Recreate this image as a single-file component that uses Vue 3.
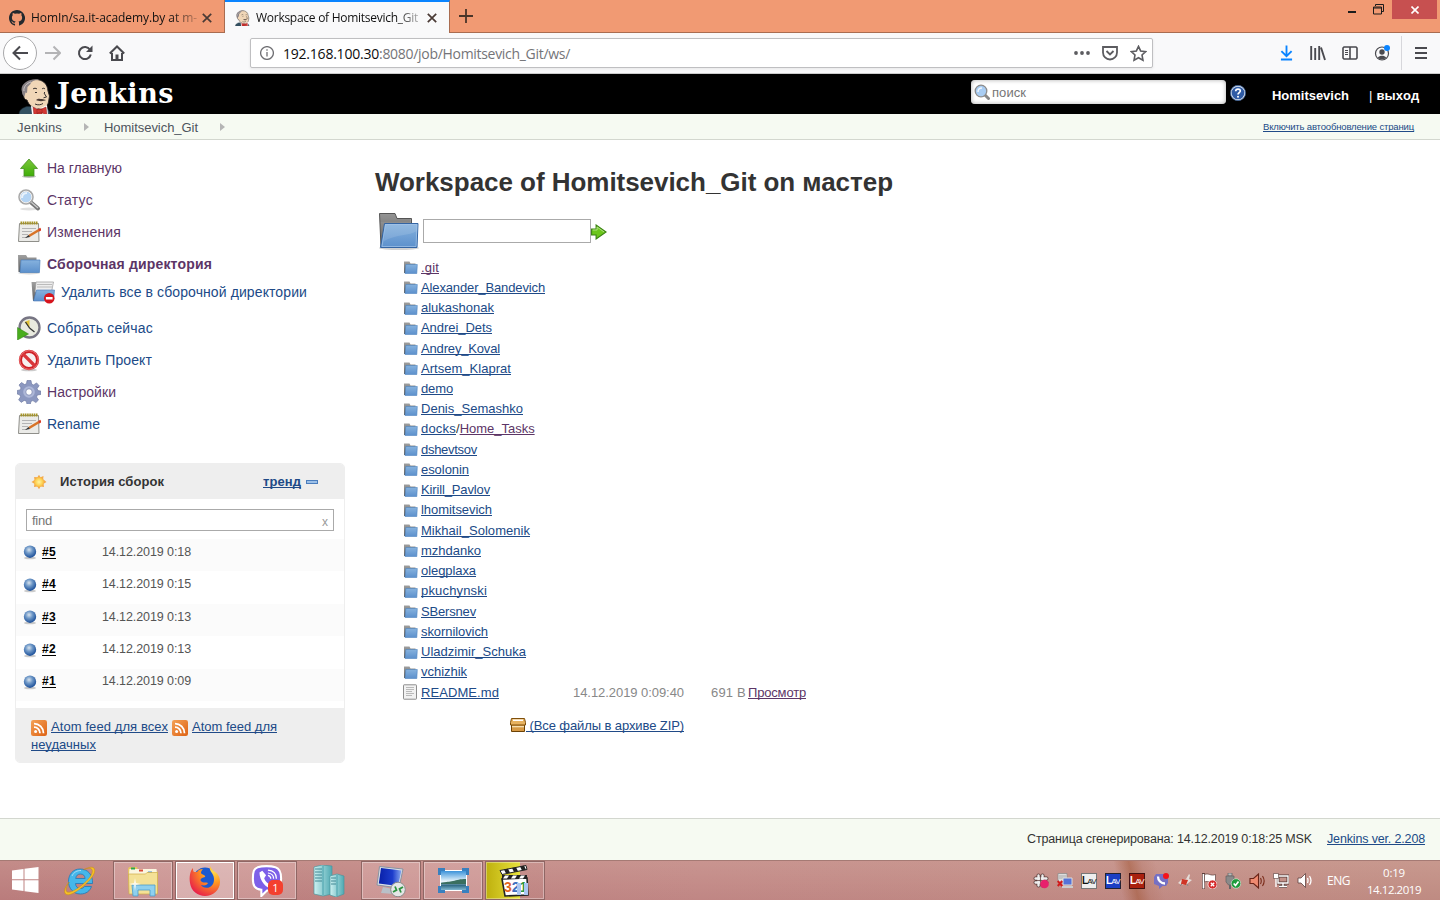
<script setup>
// Spreads the letters of an element so that it takes the given width in pixels.
const vFit = {
  mounted(el, { value }) {
    const range = document.createRange()
    range.selectNodeContents(el)
    const w = range.getBoundingClientRect().width
    const n = el.textContent.length
    if (w && n) el.style.letterSpacing = (value - w) / n + 'px'
  },
}

const tasks = [
  { icon: 'up', text: 'На главную', w: 75, visited: true },
  { icon: 'search', text: 'Статус', w: 46, visited: true },
  { icon: 'note', text: 'Изменения', w: 74, visited: true },
  { icon: 'folder', text: 'Сборочная директория', w: 165, visited: true, bold: true },
  { icon: 'wipe', text: 'Удалить все в сборочной директории', w: 246, sub: true },
  { icon: 'clock', text: 'Собрать сейчас', w: 106 },
  { icon: 'ban', text: 'Удалить Проект', w: 105 },
  { icon: 'gear', text: 'Настройки', w: 69, visited: true },
  { icon: 'note', text: 'Rename', w: 53 },
]

const builds = [
  { id: '#5', at: '14.12.2019 0:18' },
  { id: '#4', at: '14.12.2019 0:15' },
  { id: '#3', at: '14.12.2019 0:13' },
  { id: '#2', at: '14.12.2019 0:13' },
  { id: '#1', at: '14.12.2019 0:09' },
]

const dirs = [
  ['.git', 18], ['Alexander_Bandevich', 124], ['alukashonak', 73], ['Andrei_Dets', 71],
  ['Andrey_Koval', 79], ['Artsem_Klaprat', 90], ['demo', 32], ['Denis_Semashko', 102],
  ['docks', 35], ['dshevtsov', 56], ['esolonin', 48], ['Kirill_Pavlov', 69],
  ['lhomitsevich', 71], ['Mikhail_Solomenik', 109], ['mzhdanko', 60], ['olegplaxa', 55],
  ['pkuchynski', 66], ['SBersnev', 55], ['skornilovich', 67], ['Uladzimir_Schuka', 105],
  ['vchizhik', 46],
]

const apps = [
  { icon: 'win', cls: 'start' }, { icon: 'ie', cls: 'plain' }, { icon: 'explorer', cls: 'open' },
  { icon: 'firefox', cls: 'open active' }, { icon: 'viber', cls: 'open' }, { icon: 'servers', cls: 'plain' },
  { icon: 'rdp', cls: 'open' }, { icon: 'picture', cls: 'open' }, { icon: 'clapper', cls: 'open progress' },
]
const tray = ['slack', 'netpc', 'lavw', 'lavb', 'lavr', 'tviber', 'java', 'flag', 'usb', 'spk', 'net', 'vol']
</script>

<template>
  <div class="screen">
    <svg class="sprite" width="0" height="0">
      <defs>
        <linearGradient id="gBlue" x1="0" y1="0" x2="0" y2="1"><stop offset="0" stop-color="#86b2de" /><stop offset="1" stop-color="#5c90cc" /></linearGradient>
        <linearGradient id="gGrey" x1="0" y1="0" x2="0" y2="1"><stop offset="0" stop-color="#a0a0a0" /><stop offset="1" stop-color="#5c5c5c" /></linearGradient>
        <linearGradient id="gGreen" x1="0" y1="0" x2="0" y2="1"><stop offset="0" stop-color="#7cc73c" /><stop offset="1" stop-color="#3fae08" /></linearGradient>
        <linearGradient id="gOrange" x1="0" y1="0" x2="1" y2="1"><stop offset="0" stop-color="#f4a257" /><stop offset="1" stop-color="#de6213" /></linearGradient>
        <radialGradient id="gBall" cx=".42" cy=".35" r=".62"><stop offset="0" stop-color="#d9e4ee" /><stop offset=".45" stop-color="#7099c8" /><stop offset="1" stop-color="#21549c" /></radialGradient>
        <radialGradient id="gSun"><stop offset="0" stop-color="#fff6a0" /><stop offset="1" stop-color="#fcc43c" /></radialGradient>
        <radialGradient id="gFire" cx=".8" cy=".15" r=".95"><stop offset="0" stop-color="#ffe14d" /><stop offset=".45" stop-color="#ff9420" /><stop offset="1" stop-color="#e8204a" /></radialGradient>
        <linearGradient id="gAqua" x1="0" y1="0" x2="1" y2="0"><stop offset="0" stop-color="#cdf1f1" /><stop offset="1" stop-color="#4fa9b2" /></linearGradient>
        <linearGradient id="gScreen" x1="0" y1="0" x2="1" y2="0"><stop offset="0" stop-color="#0920a8" /><stop offset=".6" stop-color="#1c3ccc" /><stop offset="1" stop-color="#88a8ef" /></linearGradient>
        <linearGradient id="gSky" x1="0" y1="0" x2="0" y2="1"><stop offset="0" stop-color="#3c93da" /><stop offset=".55" stop-color="#eaf6fb" /><stop offset=".75" stop-color="#306a85" /><stop offset="1" stop-color="#80b8d0" /></linearGradient>
      </defs>

      <symbol id="github" viewBox="0 0 16 16"><path fill="#24292e" d="M8 0C3.58 0 0 3.58 0 8c0 3.54 2.29 6.53 5.47 7.59.4.07.55-.17.55-.38v-1.5c-2.2.4-2.7-.9-2.9-1.4-.2-.5-.6-.9-1-1.1.7-.2 1.3.2 1.7.8.6.9 1.4.7 2.2.4.1-.5.3-.9.6-1.1-2-.2-3.7-.9-3.7-3.9 0-.9.3-1.6.8-2.2-.1-.3-.4-1.1.1-2.2 0 0 .7-.2 2.2.8a7.5 7.5 0 0 1 4 0c1.500-1 2.200-.8 2.200-.8.5 1.100.2 1.900.1 2.200.5.6.8 1.300.8 2.200 0 3-1.800 3.700-3.700 3.900.3.3.6.8.6 1.500v2.400c0 .2.1.5.5.4A8 8 0 0 0 8 0z" /></symbol>
      <symbol id="butler" viewBox="0 0 34 36">
        <path fill="#335061" stroke="#1c2c36" stroke-width=".6" d="M2 37c0-5 3-7 8-8.500l16 .5c5 1 7 4 7 8z" />
        <path fill="#f0d6b7" stroke="#231f20" stroke-width=".9" d="M6 15C5 6 11 1.500 18.500 1.500c7 0 12 4 12.500 11.500l1.500 5-1 6c-1 4-4 7-9 7-6 0-11-4-12.500-9-3 0-3.500-4-4-7z" />
        <path fill="#8a8386" d="M5 14C3 8 8 3 14 2c3-.8 6-1 8-.3-5 .3-8 1.800-8.500 4.300l-3 3-.5 6-1.500-.5-1 4C6 18 5 16 5 14z" />
        <path fill="none" stroke="#d8d4d4" stroke-width=".8" d="M7 13c-1-4 3-8 7-9" />
        <path fill="#fff" d="M14 28l8 3 8-4 1 9H15z" />
        <path fill="#d33833" stroke="#8b1d1a" stroke-width=".5" d="M16 29l6 3 7-3 1 8-7-3-6 3zM20 31h5v5h-5z" />
        <path fill="none" stroke="#231f20" stroke-width=".9" d="M16 11c1-1 3-1 4 0M25 11c1-1 2-1 3 0M18 14.500h2M27 14.500h1M27 15l2.500 4-3 .8M18 26c3 1.500 6 .8 8-.5" />
        <path fill="#4a3b36" d="M19 22c2-2 4-1.300 6-1l4 1c-2 1.500-8 1.500-10 0z" />
      </symbol>
      <symbol id="folder" viewBox="0 0 24 24"><ellipse cx="12" cy="21" rx="11" ry="1.500" fill="#000" opacity=".15" /><path fill="url(#gGrey)" d="M1 3h8l1.500 2.500H19.500V20H1.500z" /><path fill="url(#gBlue)" stroke="#4a7fbb" stroke-width=".7" d="M4 8h19l-.6 12.500H3z" /></symbol>
      <symbol id="dir" viewBox="0 0 15 16"><path fill="url(#gGrey)" d="M1 2.500h5.500l1 2H12.500V14H1z" /><path fill="url(#gBlue)" stroke="#4f84c0" stroke-width=".6" d="M2.800 5.500h11.500l-.5 9H2z" /></symbol>
      <symbol id="bigfolder" viewBox="0 0 48 48"><ellipse cx="24" cy="41" rx="20" ry="2" fill="#000" opacity=".18" /><path fill="url(#gGrey)" stroke="#555" d="M4.500 6.500H20L22 11.500h14.500V40H6z" /><path stroke="#555" stroke-width=".6" opacity=".5" d="M5 8h15M5 10h16M5 12h30M5 14h30" /><path fill="url(#gBlue)" stroke="#3465a4" d="M9.500 16.500h33.500l-1 24H5.500z" /><path fill="#fff" opacity=".12" d="M10 17h32v7c-8 5-20 3-33 10z" /><path fill="none" stroke="#a4c5e8" opacity=".7" d="M10.500 17.500H42l-1 22H7z" /></symbol>
      <symbol id="up" viewBox="0 0 24 24"><ellipse cx="12" cy="20.500" rx="7" ry="1.500" fill="#000" opacity=".25" /><path fill="url(#gGreen)" stroke="#489023" stroke-width=".8" d="M12 3l8.500 9.500H17V20H7v-7.500H3.500z" /></symbol>
      <symbol id="search" viewBox="0 0 24 24"><ellipse cx="12" cy="21" rx="9" ry="1.500" fill="#000" opacity=".12" /><path d="M13.500 14l7.500 6.500" stroke="#777" stroke-width="4" stroke-linecap="round" /><path d="M14 14l7 6" stroke="#ccc" stroke-width="1.200" /><circle cx="9" cy="9" r="6.800" fill="#b4d4f4" stroke="#a9a9a9" stroke-width="2" /><circle cx="9" cy="9" r="5.800" fill="none" stroke="#eee" /><path d="M5 10c0-3 2-5 5-5" stroke="#fff" stroke-width="2" fill="none" opacity=".7" /></symbol>
      <symbol id="find" viewBox="0 0 16 16"><path d="M10 10l4.500 4.500" stroke="#888" stroke-width="3" stroke-linecap="round" /><circle cx="7" cy="7" r="5.800" fill="#a9cdf3" stroke="#8c8c8c" stroke-width="1.300" /><path d="M4 8c0-2 1-4 4-4" stroke="#fff" stroke-width="1.500" fill="none" opacity=".8" /></symbol>
      <symbol id="note" viewBox="0 0 24 24"><path fill="#ebebe8" stroke="#8f8f8a" d="M2.500 3.500h19l.5 18H1.500z" /><path stroke="#a49328" stroke-width="3" stroke-dasharray="1.600 .6" d="M3.500 3h17" /><path stroke="#b4b4b4" d="M5 8.500h14M5 11.500h10M5 14.500h6M5 17.500h5" /><path stroke="#d87428" stroke-width="2.600" d="M22 10l-10 6" /><path stroke="#d83c24" stroke-width="2.800" d="M24 9l-2.200 1.200" /><path fill="#333" d="M8 18l3.500-3 1.500 2z" /></symbol>
      <symbol id="minus-badge" viewBox="0 0 24 24"><circle cx="12" cy="12" r="11" fill="#d7141c" /><path fill="#fff" d="M5 9.500h14v5H5z" /></symbol>
      <symbol id="wipe" viewBox="0 0 24 24"><path fill="url(#gGrey)" d="M.5 2H8l4 2v17H2z" /><path fill="#eee" stroke="#999" stroke-width=".7" d="M5 2h17.500l-2 10H4z" /><path stroke="#bbb" d="M6 4.500h15M6 7h15" /><path fill="url(#gBlue)" stroke="#4a7ab8" stroke-width=".6" d="M5.500 10h18L22.500 21H2.500z" /><use href="#minus-badge" x="12.500" y="12.500" width="11.500" height="11.500" /></symbol>
      <symbol id="clock" viewBox="0 0 24 24"><circle cx="12.500" cy="11.500" r="10" fill="#e9eadf" stroke="#777583" stroke-width="2.300" /><path fill="#e4c438" d="M12.500 12V4l-5 2z" /><path stroke="#333" stroke-width="1.300" d="M12.500 12l-4-6M12.500 12l5 4" fill="none" /><path fill="#49ad1d" stroke="#2f7f11" stroke-width=".5" d="M.5 11.500l11 6.500-11 6z" /></symbol>
      <symbol id="ban" viewBox="0 0 24 24"><ellipse cx="12" cy="22" rx="8" ry="1.300" fill="#000" opacity=".2" /><circle cx="12" cy="12" r="8.600" fill="#f6f0f0" stroke="#cf2026" stroke-width="3.200" /><path stroke="#d9363a" stroke-width="3.200" d="M6 6l12 12" /><circle cx="12" cy="12" r="9.300" fill="none" stroke="#f58a8a" stroke-width=".8" /></symbol>
      <symbol id="gear" viewBox="0 0 24 24"><g fill="#8c98c0" stroke="#66729c" stroke-width=".6"><path d="M10 .5h4l.6 3.500 2 .9 3-2 2.500 2.800-2 2.900.8 2 3 .5v3.300l-3.500.6-.9 2 2 3-2.600 2.600-3-2-2 .8-.6 3.100H10l-.6-3.200-2.200-.9-3 2-2.600-2.600 2-3-.9-2L.2 14v-3.500l3-.6.8-2-2-2.900L4.500 2.500l3 2 2-.8z" /></g><circle cx="12" cy="12" r="5.800" fill="#aeb8d8" /><circle cx="12" cy="12" r="3.300" fill="#fff" stroke="#8a94ba" /></symbol>
      <symbol id="sun" viewBox="0 0 16 16"><path fill="#f3a94a" d="M8 .7l1.500 2.600 3-1.300-.3 3.300L15.500 8l-2.900 1.800.4 3.200-3.400-.6L8 15.300l-1.700-2.900-3.300.6.400-3.200L.5 8l3-1.900-.4-3.200 3.300.3z" /><circle cx="8" cy="8" r="4.600" fill="url(#gSun)" stroke="#f8bd50" stroke-width=".6" /></symbol>
      <symbol id="ball" viewBox="0 0 16 16"><ellipse cx="8" cy="14" rx="6" ry="1.300" fill="#000" opacity=".2" /><circle cx="8" cy="7.700" r="6.200" fill="url(#gBall)" /></symbol>
      <symbol id="rss" viewBox="0 0 16 16"><rect width="16" height="16" rx="2.200" fill="url(#gOrange)" /><circle cx="4.600" cy="11.600" r="1.500" fill="#fff" /><path fill="none" stroke="#fff" stroke-width="1.800" d="M3 7.200a6 6 0 0 1 6 6M3 3.700a9.500 9.500 0 0 1 9.500 9.500" /></symbol>
      <symbol id="arrow" viewBox="0 0 16 16"><path fill="#6cc61c" stroke="#3a8212" stroke-width="1.100" d="M.6 5h4.500V1l10 7-10 7v-4H.6z" /><path fill="none" stroke="#bfe89a" stroke-width=".8" d="M1.600 6h4.500V3l7 5" /></symbol>
      <symbol id="text" viewBox="0 0 16 16"><rect x="1.500" y=".8" width="13" height="14.400" rx=".6" fill="#f2f2f2" stroke="#8d8d8d" /><path stroke="#b3b3b3" stroke-width=".9" d="M4 3.500h8M4 5.500h8M4 7.500h6M4 9.500h8M4 11.500h6" /></symbol>
      <symbol id="zip" viewBox="0 0 16 16"><path fill="#d79a45" stroke="#6c4205" d="M1.500 7h13v7.500h-13z" /><path fill="#e7b25f" stroke="#7f4f0a" d="M.5 5.500L1.500 1.500h13l1 4v2.500H.5z" /><path fill="#fff" d="M3 2.500h10v1.500H3z" /><path fill="#f6dfb0" d="M2 9h12v1.300H2z" /></symbol>
      <symbol id="help" viewBox="0 0 16 16"><circle cx="8" cy="8" r="7" fill="#2f5ba5" stroke="#dbe4f1" stroke-width="1.300" /><circle cx="8" cy="8" r="7.600" fill="none" stroke="#234a86" stroke-width=".7" /><path fill="none" stroke="#fff" stroke-width="1.700" d="M5.700 6.300c0-3 4.600-2.900 4.600-.3 0 1.500-2.300 1.700-2.300 3.500" /><circle cx="8" cy="11.800" r="1" fill="#fff" /></symbol>

      <symbol id="win" viewBox="0 0 28 28"><path fill="#fff" d="M1 4.500l11.500-1.500v10.300H1zM13.500 2.800L27.500 1v12.300h-14zM1 14.300h11.500V25L1 23.500zM13.500 14.300h14V27l-14-1.800z" /></symbol>
      <symbol id="ie" viewBox="0 0 32 32"><path fill="#45b7ea" stroke="#1f78b6" stroke-width=".8" d="M16 5C8.500 5 4.500 11 4.500 17.500S9 30 16.500 30c5.500 0 9.500-3 11-7.500h-7c-1 1.500-2.300 2-4 2-3 0-4.800-1.800-5-5h17C29 11 24 5 16 5zm-4.300 9.500c.4-3 2-4.500 4.800-4.500 2.700 0 4.300 1.500 4.600 4.500z" /><path fill="none" stroke="#fff" opacity=".5" d="M8 12c2-4 5-5.500 9-5.500" /><path fill="#f5c025" stroke="#c78a10" stroke-width=".5" d="M30.500 5c-1-3-6-2-11 .8 5-2 8-2 8.700.4 1 4-4 10-11 15.500S3.500 30 2.300 27c-.8-2 .5-5.500 3-9C2 21.500-1 27 1.500 30c2.500 2.500 10-1 17.500-7.500S32 9.500 30.500 5z" /></symbol>
      <symbol id="explorer" viewBox="0 0 32 32"><path fill="#e6c75e" d="M1 4l1-2h8l1 3h8l1 1h10l1 2v20H2z" /><path fill="#fbf6df" d="M2.500 4h27l.5 5H2z" /><path fill="#2da44e" d="M4 2.500h4v2H4z" /><path fill="#d84a34" d="M12 4.500h4v2h-4z" /><path fill="#4a90d9" d="M21 6.500h4v2h-4z" /><path fill="#f4e196" stroke="#cfae48" stroke-width=".7" d="M1.500 9h17l1.500-1.500h10.500V29H2z" /><path fill="#8fd0ee" stroke="#4c9cc9" stroke-width=".8" d="M5 20h23v11h-5v-6H11v6H6z" /><path fill="#fff" opacity=".8" d="M8 13l1 5 5 1-5 1-1 6-1-6-5-1 5-1z" /></symbol>
      <symbol id="firefox" viewBox="0 0 32 32"><circle cx="16" cy="14" r="11.500" fill="#1c59cf" /><path fill="url(#gFire)" d="M21 1c-1 5 2 6 3 9 2 4 1 10-3 12s-8 0-9-2c4 1 6 0 7-2-2-1-4 0-6-1s-2-3 0-4l3-1c1-2-3-2-4-4 0-2 1-3 2-4-3 0-5 1-6 3-1 0-2 0-3 0-1-1-1-2-1-4C1 6 0 12 1 18c1 8 8 13 15 13 8 0 15-6 15-14 0-6-3-9-5-10C24 5 22 4 21 1z" /></symbol>
      <symbol id="viber" viewBox="0 0 32 34"><path fill="#7d60e8" stroke="#fff" stroke-width="2.200" d="M6 2.500C11 .8 20 .8 25 2.500c5 1.500 6 6 6 12s-1.500 10-6 11.500c-3 .8-6 1-9 1l-6 6v-6.700C3 25.500 1 22 1 14.500S2 4 6 2.500z" /><path fill="#fff" d="M8 8l3-2 4 5-2 3c1 3 3 5 5 6l3-2 5 4-3 4C15 25 8 17 8 8z" /><path fill="none" stroke="#fff" stroke-width="1.300" d="M17 5.500c6 .5 9 4 9 9M17 8.500c4 .5 6 3 6 6M17 11c2 .5 3 1.500 3 3.500" /></symbol>
      <symbol id="servers" viewBox="0 0 32 32"><path fill="url(#gAqua)" stroke="#4a969f" stroke-width=".7" d="M1 2l8-2 10 1v28l-9 2-9-2z" /><path stroke="#357f8c" stroke-width=".9" d="M2 4h7M2 7h7M2 10h7M2 13h7M2 16h7" /><path stroke="#479faa" d="M10 1v29" /><path fill="url(#gAqua)" stroke="#4a969f" stroke-width=".7" d="M17 11l7-2 7 2v18l-8 3-6-2z" /><path stroke="#357f8c" stroke-width=".9" d="M18 13h5M18 16h5M18 19h5" /><path stroke="#479faa" d="M24 10v21" /></symbol>
      <symbol id="rdp" viewBox="0 0 32 32"><path fill="#b9c0c8" d="M8 22l10 2 1 5-13-1z" /><path fill="#d9dfe6" stroke="#8992a0" d="M4.500 1.500L28 4l-4 19L2 20z" /><path fill="url(#gScreen)" d="M6 3l20.500 2.500L23 21 3.800 18.500z" /><circle cx="23" cy="24.500" r="7.300" fill="#e4e6e6" stroke="#8a8a8a" /><path fill="none" stroke="#2f9340" stroke-width="1.800" d="M18 27l3.500-2-1.500-3.500M28 22l-3.500 2 1.500 3.500" /></symbol>
      <symbol id="picture" viewBox="0 0 32 32"><path fill="#fff" d="M3 5h27v21H3z" /><path fill="url(#gSky)" d="M4 6h25v19H4z" /><path fill="#3a6f5f" d="M4 18c6-1.500 8-1 12-2s7-2 13-2v5H4z" /><path fill="#3980bf" d="M1 3h7v3H4v4H1zM32 3h-7v3h4v4h3zM1 28h7v-3H4v-4H1zM32 28h-7v-3h4v-4h3z" /></symbol>
      <symbol id="clapper" viewBox="0 0 32 32"><path fill="#fff" stroke="#222" stroke-width="1.600" d="M3 14l25-1 1 17-23 1z" /><path fill="#fff" stroke="#222" d="M1 5.500l26-5 1 4L3 9.500z" /><path fill="#222" d="M5 4.500l4-.8 2 4-4 .8zM13 3l4-.8 2 4-4 .8zM21 1.500l4-.8 2 4-4 .8zM3 10h25v4H3z" /><path fill="#fff" d="M6 10.500h4l-2 3H4zM14 10.500h4l-2 3h-4zM22 10.500h4l-2 3h-4z" /></symbol>

      <symbol id="slack" viewBox="0 0 16 16"><path stroke="#5a3a38" stroke-width="4" stroke-linecap="round" d="M5.500 2.500v10M9.500 2.500v10M2.500 5.500h11M2.500 9.500h11" /><path stroke="#eee" stroke-width="2.400" stroke-linecap="round" d="M5.500 2.500v10M9.500 2.500v10M2.500 5.500h11M2.500 9.500h11" /><path stroke="#6a4a48" stroke-width=".8" d="M4 7.500h8M7.500 3v10" /><circle cx="11.500" cy="11" r="4.300" fill="#e8206c" /></symbol>
      <symbol id="netpc" viewBox="0 0 16 16"><path fill="#ddd" stroke="#888" stroke-width=".7" d="M1 .5h9v9H1z" /><path stroke="#aaa" d="M2 3h7M2 5h7" /><path fill="#5472d8" stroke="#ddd" d="M6 5h9v7H6z" /><path fill="#ccc" d="M5 13h11v2H5z" /><path stroke="#d21b1b" stroke-width="2" d="M.7 8l4.500 5M5.200 8l-4.500 5" /></symbol>
      <symbol id="tviber" viewBox="0 0 16 16"><path fill="#7570c4" d="M3 1h10l2 2v7l-2 3H9.500L6 16v-3L1 11V4z" /><path fill="none" stroke="#fff" stroke-width="2.300" d="M5 3.500c0 4 3 7 7 7" /><circle cx="13" cy="3" r="3" fill="#f5131b" /></symbol>
      <symbol id="java" viewBox="0 0 16 16"><path fill="#e4dcd8" d="M1 10l3-3 5-1 3-5 1 1-1 4 3 1-5 4-5 1z" /><path fill="#cf3526" d="M5 6l6 1-2 5-5-1z" /><path stroke="#888" d="M3 13l2-2M10 11l1 2" /></symbol>
      <symbol id="flag" viewBox="0 0 16 16"><path stroke="#5d3f3c" stroke-width="3" d="M2.500 0v16" /><path stroke="#fff" stroke-width="1.700" d="M2.500 1v14.500" /><path fill="#fff" stroke="#5d3f3c" stroke-width=".7" d="M3.500 1.500c4-2 6 2 11 0V9c-5 2-7-2-11 0z" /><circle cx="11.500" cy="11.500" r="4.500" fill="#d52b2b" stroke="#fff" stroke-width=".7" /><path stroke="#fff" stroke-width="1.300" d="M9.800 9.800l3.400 3.400M13.200 9.800l-3.400 3.400" /></symbol>
      <symbol id="usb" viewBox="0 0 16 16"><path fill="#bbb" stroke="#606060" stroke-width=".7" d="M3 0h4v3H3z" /><path fill="#8a8a8a" stroke="#606060" stroke-width=".7" d="M1 3h8v6l-2.500 3h-3L1 9z" /><path stroke="#666" stroke-width="2" d="M5 12v4" /><circle cx="11" cy="10.500" r="4.800" fill="#1e9c3c" stroke="#d5e3d5" stroke-width=".7" /><path fill="none" stroke="#fff" stroke-width="1.700" d="M8.700 10.500l1.800 2 3-4" /></symbol>
      <symbol id="spk" viewBox="0 0 16 16"><path fill="#ef8a70" stroke="#6a2417" stroke-width="1.100" d="M1 5.500h3.500L9.500 1v14l-5-4.500H1z" /><path fill="none" stroke="#7a2a18" stroke-width="1.100" d="M11.500 5c1 2 1 4 0 6M13.500 3c2 3 2 7 0 10" /></symbol>
      <symbol id="net" viewBox="0 0 16 16"><path fill="none" stroke="#543b38" stroke-width="3" d="M5 3h10v7H5zM10 10v3M6 13.500h8" /><path fill="none" stroke="#fff" stroke-width="1.400" d="M5 3h10v7H5zM10 10v3M6 13.500h8M3 5v9" /><path fill="#fff" stroke="#543b38" stroke-width=".6" d="M.5.5h5v5h-5z" /></symbol>
      <symbol id="vol" viewBox="0 0 16 16"><path fill="#fff" stroke="#5f4340" stroke-width=".8" d="M1 5h3L8.500.5v14L4 10H1z" /><path fill="none" stroke="#fff" stroke-width="1.300" d="M10.500 5c.8 2 .8 3 0 5M12.500 3c2 3 2 6 0 9" /></symbol>
    </svg>

    <!-- Tab strip -->
    <div class="tabs">
      <div class="tab">
        <svg class="i16"><use href="#github" /></svg>
        <span class="title"><span v-fit="166">HomIn/sa.it-academy.by at m-</span></span>
        <svg class="x" viewBox="0 0 10 10"><path d="M.8.8l8.400 8.400M9.200.8L.8 9.200" /></svg>
      </div>
      <div class="tab on">
        <svg class="i16"><use href="#butler" /></svg>
        <span class="title"><span v-fit="162">Workspace of Homitsevich_Git</span></span>
        <svg class="x" viewBox="0 0 10 10"><path d="M.8.8l8.400 8.400M9.200.8L.8 9.200" /></svg>
      </div>
      <svg class="plus" viewBox="0 0 14 14"><path d="M7 0v14M0 7h14" /></svg>
      <div class="winbtns">
        <span class="min"></span>
        <svg class="restore" viewBox="0 0 11 11"><path d="M2.500 2V.5h8v7H9" /><path d="M.5 3h8v7h-8zM.5 4h8" /></svg>
        <span class="close"><svg viewBox="0 0 8 8"><path d="M.5.5l7 7M7.500.5l-7 7" /></svg></span>
      </div>
    </div>

    <!-- Browser toolbar -->
    <div class="nav">
      <span class="back"><svg viewBox="0 0 16 16"><path d="M16 8H1.500M8 1.500L1.500 8 8 14.500" /></svg></span>
      <svg class="fwd" viewBox="0 0 16 16"><path d="M0 8h14.500M8.500 1.500L15 8l-6.500 6.500" /></svg>
      <svg class="reload" viewBox="0 0 16 16"><path d="M13 4.800A6 6 0 1 0 13.800 9.500" /><path class="f" d="M15.500.5v6.500H9z" /></svg>
      <svg class="home" viewBox="0 0 16 16"><path d="M.8 8.500L8 1.500l7.200 7M3 8v7h10V8" /><path class="f" d="M6.500 9.500h3v5h-3z" /></svg>
      <div class="url">
        <svg class="info" viewBox="0 0 14 14"><circle cx="7" cy="7" r="6.400" /><path d="M7 6v4.500M7 3.200v1.500" /></svg>
        <span class="addr"><b v-fit="96">192.168.100.30</b><span v-fit="191">:8080/job/Homitsevich_Git/ws/</span></span>
        <svg class="dots" viewBox="0 0 16 4"><circle cx="2" cy="2" r="1.900" /><circle cx="8" cy="2" r="1.900" /><circle cx="14" cy="2" r="1.900" /></svg>
        <svg class="pocket" viewBox="0 0 16 15"><path d="M1 1h14v5.500a7 7 0 0 1-14 0zM4.500 5L8 8.500 11.500 5" /></svg>
        <svg class="star" viewBox="0 0 16 16"><path d="M8 1.300l2 4.300 4.800.6-3.500 3.200.9 4.900L8 12l-4.200 2.300.9-4.900L1.200 6.200 6 5.600z" /></svg>
      </div>
      <div class="tools">
        <svg class="dl" viewBox="0 0 14 16"><path d="M7 0v11M1.500 6L7 11.500 12.500 6M1 15h12" /></svg>
        <svg class="lib" viewBox="0 0 16 16"><path d="M1.200 1v14M5.200 3v12M9.200 1v14M11 2.500L15 15" /></svg>
        <svg class="side" viewBox="0 0 16 14"><path d="M2 1h12l1 1v10l-1 1H2l-1-1V2zM8 1v12" /><path class="thin" d="M3 4.500h3M3 6.500h3M3 8.500h3" /></svg>
        <svg class="acct" viewBox="0 0 16 16"><circle cx="8" cy="8.500" r="6.500" /><circle class="f" cx="8" cy="7" r="2.700" /><path class="f" d="M3.800 12.500c2-2.500 6.400-2.500 8.400 0-2 2.500-6.400 2.500-8.400 0z" /><circle class="dot" cx="13" cy="3" r="3" /></svg>
        <i class="sep"></i>
        <svg class="menu" viewBox="0 0 12 12"><path d="M0 1h12M0 6h12M0 11h12" /></svg>
      </div>
    </div>

    <!-- Jenkins header -->
    <header>
      <svg class="logo"><use href="#butler" /></svg>
      <span class="brand"><span v-fit="117">Jenkins</span></span>
      <div class="find"><svg class="i16"><use href="#find" /></svg><span v-fit="34">поиск</span></div>
      <svg class="i16 help"><use href="#help" /></svg>
      <b class="user"><span v-fit="77">Homitsevich</span></b>
      <b class="logout"><i>|</i><span v-fit="43">выход</span></b>
    </header>
    <div class="crumbs">
      <span v-fit="45">Jenkins</span><i></i><span v-fit="94">Homitsevich_Git</span><i></i>
      <a class="auto"><span v-fit="151">Включить автообновление страниц</span></a>
    </div>

    <div class="page">
      <aside>
        <ul class="tasks">
          <li v-for="t in tasks" :key="t.text" :class="{ sub: t.sub, visited: t.visited, bold: t.bold }">
            <svg class="i24"><use :href="'#' + t.icon" /></svg><span v-fit="t.w">{{ t.text }}</span>
          </li>
        </ul>
        <section class="history">
          <div class="hhead">
            <svg class="i16"><use href="#sun" /></svg><b class="htitle"><span v-fit="104">История сборок</span></b>
            <a><b v-fit="38">тренд</b></a><i class="bar"></i>
          </div>
          <div class="hfind"><span v-fit="20">find</span><em>x</em></div>
          <div v-for="b in builds" :key="b.id" class="build">
            <svg class="i16"><use href="#ball" /></svg><b class="bid"><span v-fit="14">{{ b.id }}</span></b><span v-fit="89">{{ b.at }}</span>
          </div>
          <div class="feeds">
            <svg class="i16"><use href="#rss" /></svg><a v-fit="117">Atom feed для всех</a>
            <svg class="i16 second"><use href="#rss" /></svg><a v-fit="85">Atom feed для</a><br />
            <a v-fit="65">неудачных</a>
          </div>
        </section>
      </aside>

      <main>
        <h1><span v-fit="518">Workspace of Homitsevich_Git on мастер</span></h1>
        <div class="path">
          <svg class="big"><use href="#bigfolder" /></svg><span class="box"></span><svg class="i16"><use href="#arrow" /></svg>
        </div>
        <div class="files">
          <div v-for="([name, w], i) in dirs" :key="name" class="row">
            <svg class="dir"><use href="#dir" /></svg><a v-fit="w" :class="{ visited: i === 0 }">{{ name }}</a>
            <template v-if="name === 'docks'"><span>/</span><a v-fit="75" class="visited">Home_Tasks</a></template>
          </div>
          <div class="row">
            <svg class="i16 doc"><use href="#text" /></svg><span class="fname"><a v-fit="78">README.md</a></span>
            <span class="date"><span v-fit="111">14.12.2019 0:09:40</span></span>
            <span class="size"><span v-fit="35">691 B</span></span>
            <a v-fit="58" class="visited">Просмотр</a>
          </div>
        </div>
        <div class="zip"><svg class="i16"><use href="#zip" /></svg><a v-fit="158">&nbsp;(Все файлы в архиве ZIP)</a></div>
      </main>
    </div>

    <footer>
      <span class="gen"><span v-fit="285">Страница сгенерирована: 14.12.2019 0:18:25 MSK</span></span>
      <a v-fit="98">Jenkins ver. 2.208</a>
    </footer>

    <!-- Taskbar -->
    <div class="taskbar">
      <div v-for="a in apps" :key="a.icon" :class="['app', a.cls]">
        <svg><use :href="'#' + a.icon" /></svg>
        <span v-if="a.icon === 'viber'" class="badge">1</span>
        <span v-if="a.icon === 'clapper'" class="count"><b>3</b><b>2</b><b>1</b></span>
        <i v-if="a.icon === 'clapper'" class="pause"></i>
      </div>
      <div class="tray">
        <template v-for="t in tray" :key="t">
          <span v-if="t.startsWith('lav')" :class="['lav', t]"><b>L</b>AV</span>
          <svg v-else class="i16"><use :href="'#' + t" /></svg>
        </template>
      </div>
      <span class="lang"><span v-fit="23">ENG</span></span>
      <div class="clock"><span v-fit="22">0:19</span><span v-fit="54">14.12.2019</span></div>
    </div>
  </div>
</template>

<style>
body { margin: 0; overflow: hidden; }
</style>

<style scoped>
* { box-sizing: border-box; }
.screen { width: 1440px; height: 900px; display: flex; flex-direction: column; overflow: hidden; background: #fff; color: #333; font: 13px "Liberation Sans", Arial, sans-serif; white-space: nowrap; }
.sprite { position: absolute; }
svg { flex: none; display: block; }
.i16 { width: 16px; height: 16px; }
.i24 { width: 24px; height: 24px; }
a { color: #204a87; text-decoration: underline; text-decoration-thickness: 1px; text-underline-offset: 1px; text-decoration-skip-ink: none; }
a.visited, .visited { color: #5c3566; }

.tabs { height: 33px; flex: none; display: flex; align-items: stretch; background: #f19a73; box-shadow: inset 0 -1px #a96c50; font: 12px "Open Sans", "Noto Sans", sans-serif; color: #111; }
.tab { width: 225px; display: flex; align-items: center; padding: 2px 0 0 9px; border-right: 1px solid #a96c50; }
.tab.on { background: #f9f9fa; border-top: 2px solid #0a84ff; padding-top: 0; }
.title { width: 166px; margin-left: 6px; overflow: hidden; mask-image: linear-gradient(90deg, #000 140px, rgba(0, 0, 0, .2) 166px); }
.x { width: 10px; height: 10px; margin-left: 5px; fill: none; stroke: #4a3a35; stroke-width: 1.7; }
.plus { width: 14px; height: 14px; margin: 9px 0 0 9px; stroke: #4a3428; stroke-width: 1.8; }
.winbtns { margin-left: auto; display: flex; padding-right: 3px; }
.min { width: 8px; height: 2px; background: #1c1c1c; margin-top: 11px; }
.restore { width: 11px; height: 11px; margin: 4px 8px 0 17px; fill: none; stroke: #1c1c1c; }
.close { width: 45px; height: 19px; background: #c75050; display: flex; align-items: center; justify-content: center; }
.close svg { width: 8px; height: 8px; stroke: #fff; stroke-width: 1.6; }

.nav { height: 41px; flex: none; display: flex; align-items: center; background: #f9f9fa; border-bottom: 1px solid #ccc; padding-left: 3px; }
.nav svg { fill: none; stroke: #4a4a4f; stroke-width: 2; }
.nav svg .f { fill: #4a4a4f; stroke: none; }
.nav svg .thin { stroke-width: 1; }
.back { width: 34px; height: 34px; border: 1px solid #a9a9ab; border-radius: 50%; background: #fff; display: flex; align-items: center; justify-content: center; }
.back svg, .fwd, .reload, .home { width: 16px; height: 16px; }
.nav .fwd { margin-left: 8px; stroke: #b4b4b6; }
.reload { margin-left: 16px; }
.home { margin-left: 16px; }
.url { width: 903px; height: 30px; margin-left: 125px; display: flex; align-items: center; background: #fff; border: 1px solid #bfbfc1; border-radius: 2px; box-shadow: 0 1px 3px rgba(0, 0, 0, .08); padding-left: 9px; }
.nav .info { width: 14px; height: 14px; stroke: #6f6f73; stroke-width: 1.3; }
.addr { display: flex; width: 298px; margin-left: 9px; font: 14px "Open Sans", "Noto Sans", sans-serif; color: #747478; }
.addr b { font-weight: 400; color: #0c0c0d; }
.nav .dots { width: 16px; height: 4px; margin-left: 493px; fill: #5c5c60; stroke: none; }
.nav .pocket { width: 16px; height: 15px; margin-left: 12px; stroke: #5c5c60; stroke-width: 1.8; }
.nav .star { width: 17px; height: 17px; margin-left: 12px; stroke: #5c5c60; stroke-width: 1.5; }
.tools { display: flex; align-items: center; margin-left: 127px; height: 40px; }
.nav .dl { width: 13px; height: 16px; stroke: #0a84ff; }
.nav .lib { width: 16px; height: 16px; margin-left: 17px; stroke-width: 1.9; }
.nav .side { width: 16px; height: 14px; margin-left: 16px; stroke-width: 1.6; }
.nav .acct { width: 16px; height: 16px; margin-left: 16px; stroke-width: 1.2; }
.nav svg .dot { fill: #0a84ff; stroke: none; }
.sep { width: 1px; height: 34px; background: #d7d7db; margin: 0 13px 0 11px; }
.menu { width: 12px; height: 12px; }

header { height: 40px; flex: none; display: flex; align-items: center; background: #000; color: #fff; padding-left: 17px; }
.logo { width: 34px; height: 36px; align-self: flex-end; }
.brand { width: 923px; padding-left: 6px; font: bold 27px/36px "DejaVu Serif", serif; }
.find { width: 255px; height: 24px; margin: -4px 0 0 -3px; padding-left: 3px; display: flex; align-items: center; background: #fff; border-radius: 4px; box-shadow: inset 0 0 4px #aaa; color: #757575; }
.find span { margin-left: 2px; }
.help { margin: -2px 0 0 4px; }
.user { margin: 3px 0 0 26px; width: 97px; }
.logout { margin-top: 3px; display: flex; gap: 4px; }
.logout i { font-style: normal; font-weight: 400; }

.crumbs { height: 26px; flex: none; display: flex; align-items: center; background: #f6faf2; border-bottom: 1px solid #d3d7cf; padding: 1px 26px 0 17px; color: #4d545d; }
.crumbs i { width: 0; border: 4px solid transparent; border-left: 5px solid #b5b5b5; border-right: 0; margin: 0 15px 0 22px; }
.auto { margin: -2px 0 0 auto; font-size: 9.5px; }

.page { flex: 1; display: flex; min-height: 0; }
aside { width: 345px; padding: 12px 0 0 15px; }
.tasks { list-style: none; margin: 0; padding: 0; font-size: 14px; color: #204a87; }
.tasks li { height: 32px; display: flex; align-items: center; gap: 6px; padding-left: 2px; }
.tasks li.sub { padding-left: 16px; margin: -4px 0 4px; }
.tasks li.visited { color: #5c3566; }
.tasks li.bold { font-weight: 700; }
.history { margin-top: 23px; width: 330px; border: 1px solid #eee; border-radius: 5px; overflow: hidden; }
.hhead { height: 35px; background: #eee; display: flex; align-items: center; padding-left: 15px; }
.htitle { margin-left: 13px; width: 203px; }
.bar { width: 12px; height: 4px; border: 1px solid #4a7dbd; background: #9cc0e8; margin-left: 5px; }
.hfind { height: 22px; margin: 10px 10px 8px; border: 1px solid #aaa; display: flex; justify-content: space-between; align-items: center; padding: 0 5px; color: #757575; }
.hfind em { font-style: normal; font-size: 12px; color: #999; margin-top: 3px; }
.build { height: 32.45px; display: flex; align-items: center; padding: 0 0 7px 6px; color: #555; font-size: 12.5px; }
.build:nth-child(odd) { background: #fbfbfb; }
.build .i16 { margin-top: 1px; }
.bid { width: 60px; margin-left: 4px; font-size: 12px; color: #000; text-decoration: underline; text-underline-offset: 2px; text-decoration-skip-ink: none; }
.feeds { height: 54px; margin-top: 6.75px; background: #eee; padding: 10px 15px 0; line-height: 18px; }
.feeds .i16 { display: inline-block; vertical-align: -5px; margin-right: 4px; }
.feeds .i16.second { margin-left: 4px; }

main { padding: 26px 0 0 30px; }
h1 { margin: 0; font-size: 26px; line-height: 32px; height: 32px; }
.path { height: 48px; margin-top: 9px; display: flex; align-items: center; }
.big { width: 48px; height: 48px; }
.box { width: 168px; height: 24px; border: 1px solid #aaa; }
.path .i16 { margin-top: 2px; }
.files { margin: 2px 0 0 28px; }
.row { height: 20.24px; display: flex; align-items: center; }
.dir { width: 15px; height: 16px; margin-right: 3px; }
.doc { margin: 0 3px 0 -1px; }
.fname { width: 152px; }
.date { width: 111px; color: #888; }
.size { width: 64px; padding-left: 27px; color: #888; }
.zip { margin: 15px 0 0 135px; display: flex; align-items: center; }

footer { height: 42px; flex: none; display: flex; align-items: center; justify-content: flex-end; padding: 0 15px 2px 0; background: #f6faf2; border-top: 1px solid #d3d7cf; font-size: 12.5px; }
.gen { margin-right: 15px; }

.taskbar { height: 40px; flex: none; display: flex; align-items: center; color: #fff; border-top: 1px solid #a57a74; font: 12px "Open Sans", "Noto Sans", sans-serif;
  background: linear-gradient(75deg, transparent 1085px, rgba(160, 82, 48, .5) 1100px, rgba(176, 110, 92, .3) 1112px, transparent 1126px), linear-gradient(rgba(255, 235, 215, .14), transparent), linear-gradient(90deg, #ba7c7c, #c08684 700px, #bf8b82); }
.app { width: 60px; height: 39px; margin-right: 2px; display: flex; align-items: center; justify-content: center; position: relative; }
.app svg { width: 32px; height: 32px; }
.app.start { width: 49px; margin: 0; }
.app.start svg { width: 28px; height: 28px; margin-top: -2px; }
.app:nth-child(2) { width: 62px; padding-bottom: 2px; }
.app.open { border: 1px solid #8f6664; box-shadow: inset 0 0 0 1px rgba(255, 255, 255, .35); background: rgba(255, 225, 225, .22); }
.app.active { background: rgba(255, 240, 240, .42); box-shadow: inset 0 0 0 1px #fff; }
.app.progress { background: linear-gradient(90deg, rgba(190, 180, 0, .9), #e8e23c 34px, transparent 34px); }
.badge { position: absolute; right: 13px; bottom: 4px; width: 15px; height: 15px; border-radius: 5px; background: #f4402f; font-size: 11px; line-height: 15px; text-align: center; }
.count { position: absolute; left: 18px; top: 18px; font: 700 14px/15px "Liberation Sans", sans-serif; }
.count b:nth-child(1) { color: #e2661d; }
.count b:nth-child(2) { color: #3c6fc0; }
.count b:nth-child(3) { color: #2c9640; }
.pause { position: absolute; left: 31px; top: 21px; width: 11px; height: 12px; border: solid #a9c6f2; border-width: 0 4px; }
.tray { display: flex; gap: 8px; margin-left: auto; }
.lav { width: 16px; height: 16px; border: 1px solid #777; background: #eee; color: #111; font: 8px/14px "Liberation Sans", sans-serif; letter-spacing: -.8px; }
.lav b { font-size: 10px; }
.lavb { background: #1c3fc4; border-color: #223; color: #fff; }
.lavr { background: #a9200f; border-color: #411; color: #fff; }
.lang { margin-left: 14px; width: 40px; }
.clock { width: 54px; margin-right: 19px; display: flex; flex-direction: column; align-items: center; line-height: 17px; font-size: 11.5px; }
</style>
